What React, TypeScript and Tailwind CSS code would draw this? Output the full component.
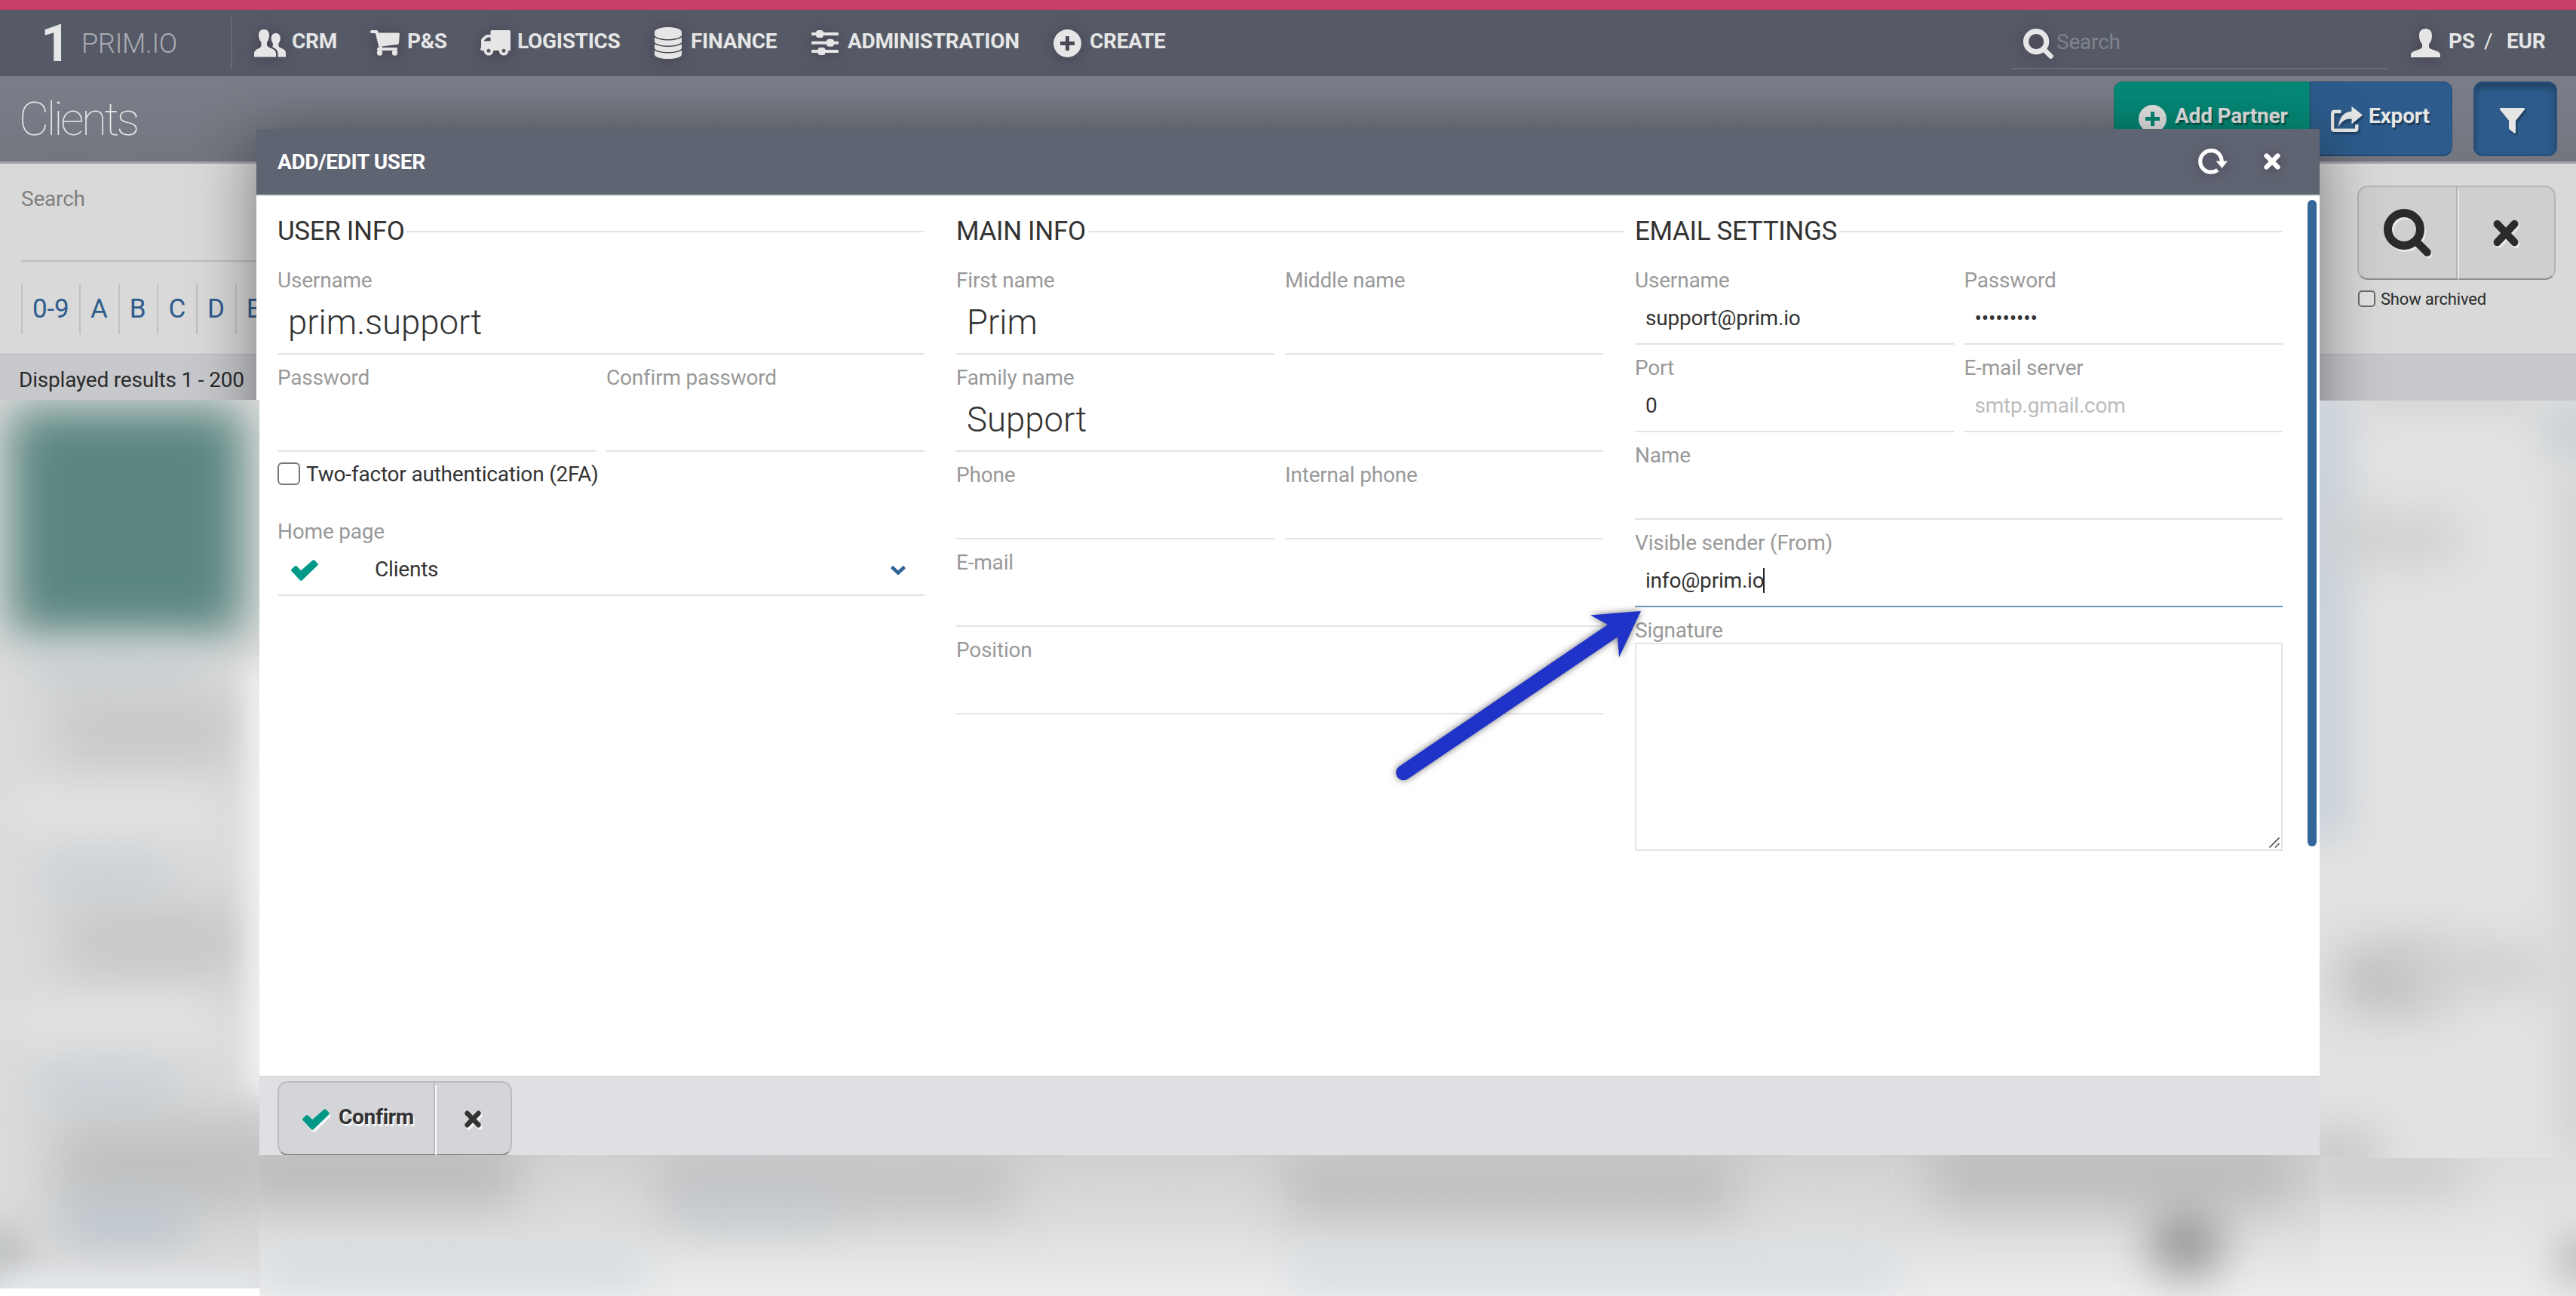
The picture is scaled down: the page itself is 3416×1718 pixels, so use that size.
import type { ReactNode } from "react";

const menu = [
    { label: "CRM", width: "w-[154px]", iconWidth: "w-[50px]", icon: <UsersIcon /> },
    { label: "P&S", width: "w-[146px]", iconWidth: "w-[49px]", icon: <CartIcon /> },
    { label: "LOGISTICS", width: "w-[231px]", iconWidth: "w-[49px]", icon: <TruckIcon /> },
    { label: "FINANCE", width: "w-[208px]", iconWidth: "w-[48px]", icon: <DatabaseIcon /> },
    { label: "ADMINISTRATION", width: "w-[321px]", iconWidth: "w-[48px]", icon: <SlidersIcon /> },
    { label: "CREATE", width: "w-[160px]", iconWidth: "w-[48px]", icon: <PlusIcon /> },
];

const letters = ["A", "B", "C", "D", "E"];

function UsersIcon() {
    return (
        <svg width="42" height="37" viewBox="0 0 42 37" fill="currentColor">
            <path d="M13 0c4.600 0 7 3 7 7.500 0 4-1.200 7.500-3 9.500v3.500c0 2 2 3 5.200 4.300C26.500 26.700 29 28.500 29 32v4.500H0V32c0-3.500 2.500-5.300 6.300-7C8.500 24 9.500 22.500 9.500 20.500V17C7.500 15 6 11.500 6 7.500 6 3 8.400 0 13 0z" />
            <path d="M28.700 5c3.800 0 6 2.600 6 6.500 0 3-1 5.500-2.300 7.300v2.700c0 1.500 1.500 2.400 4.200 3.600 3.600 1.600 5.400 3 5.400 6V36.500H31.500V32c0-3.800-2-6-6.500-8.200-.8-.4-1-1.200-.5-1.800.4-.6.500-1.500.5-3.200-1.400-1.800-2.300-4.300-2.300-7.300 0-3.900 2.200-6.500 6-6.500z" />
        </svg>
    );
}

function UserIcon() {
    return (
        <svg width="39" height="38" viewBox="0 0 39 38" fill="currentColor">
            <path d="M19.500 0c5.500 0 8.500 3.500 8.500 9 0 5-1.500 9-4 11.500v3.200c0 2 2 3 6.500 4.600C36 30.300 39 31.500 39 35v3H0v-3c0-3.500 3-4.700 8.500-6.700 4.500-1.600 6.500-2.600 6.500-4.600v-3.200C12.500 18 11 14 11 9c0-5.500 3-9 8.500-9z" />
        </svg>
    );
}

function CartIcon() {
    return (
        <svg width="39" height="34" viewBox="0 0 39 34" fill="currentColor">
            <path d="M2 0h6c1.200 0 1.900.6 2.200 1.700l.6 1.800H37c1.400 0 2 .8 1.900 2L38 17c-.1 1.200-.8 1.800-2 2l-20.500 2.500.4 1.700H34c2 0 2 3.800 0 3.800H12.500L6.800 4H2C-.6 4-.6 0 2 0z" />
            <rect x="9" y="23" width="27" height="4" rx="1.500" />
            <circle cx="12.500" cy="30" r="3.700" />
            <circle cx="32.500" cy="30" r="3.700" />
        </svg>
    );
}

function TruckIcon() {
    return (
        <svg width="40" height="34" viewBox="0 0 40 34" fill="currentColor">
            <path
                fillRule="evenodd"
                d="M15.500 0H38c1.300 0 2 .7 2 2v25H1.500C-.3 27-.3 23.500 1 23.500V14c0-1.500.5-2.500 1.500-3.500L6 7.500C7 6.500 8 6 9.500 6h4V2c0-1.300.7-2 2-2zM13.500 9.500h-3c-.8 0-1.300.2-1.800.7L5.500 13c-.8.700-.5 1.500.5 1.500h7.500z"
            />
            <circle cx="11" cy="27.200" r="6.300" />
            <circle cx="31" cy="27.200" r="6.300" />
            <circle cx="11" cy="27.200" r="2.500" fill="#555a66" />
            <circle cx="31" cy="27.200" r="2.500" fill="#555a66" />
        </svg>
    );
}

function DatabaseIcon() {
    return (
        <svg width="36" height="42" viewBox="0 0 36 42" fill="currentColor">
            <path d="M18 0c9 0 18 2.600 18 6.500V10c0 3.700-9 6-18 6S0 13.700 0 10V6.500C0 2.600 9 0 18 0z" />
            <path d="M0 13.500C4 16.300 11 17.500 18 17.500s14-1.200 18-4V19c0 3.500-9 5.500-18 5.500S0 22.500 0 19z" />
            <path d="M0 22.300C4 25 11 26 18 26s14-1 18-3.700v5.200c0 3.500-9 5.500-18 5.500S0 31 0 27.500z" />
            <path d="M0 30.800c4 2.700 11 3.700 18 3.700s14-1 18-3.700V36c0 4-9 6-18 6S0 40 0 36z" />
        </svg>
    );
}

function SlidersIcon() {
    return (
        <svg width="36" height="34" viewBox="0 0 36 34" fill="currentColor">
            <rect y="3" width="36" height="4" rx="1" />
            <rect y="14.700" width="36" height="4" rx="1" />
            <rect y="26" width="36" height="4" rx="1" />
            <rect x="6" y="0" width="10" height="10" rx="3.500" />
            <rect x="20" y="11.700" width="10" height="10" rx="3.500" />
            <rect x="8.500" y="23" width="10" height="10" rx="3.500" />
        </svg>
    );
}

function PlusIcon() {
    return (
        <svg width="37" height="37" viewBox="0 0 37 37" fill="currentColor">
            <path
                fillRule="evenodd"
                d="M18.500 0a18.500 18.500 0 1 1 0 37 18.500 18.500 0 1 1 0-37zM16 9v7H9v5h7v7h5v-7h7v-5h-7V9z"
            />
        </svg>
    );
}

function SearchIcon({ size }: { size: number }) {
    return (
        <svg width={size} height={size} viewBox="0 0 63 63" fill="none" stroke="currentColor">
            <circle cx="27" cy="27" r="21.500" strokeWidth="11" />
            <path d="M43 43L57.500 57.500" strokeWidth="10.500" strokeLinecap="round" />
        </svg>
    );
}

function ExportIcon() {
    return (
        <svg width="42" height="34" viewBox="0 0 42 34" fill="none">
            <path d="M13.500 7H4.500Q2.200 7 2.200 9.500V29.500Q2.200 31.800 4.500 31.800H32Q34.300 31.800 34.300 29.500V24" stroke="currentColor" strokeWidth="4.400" />
            <path d="M27.500 0L42 11.500 27.500 23.500V16.500C19.500 16.300 14.500 19 10 27.500 11 15 16.500 7.500 27.500 6.500z" fill="currentColor" />
        </svg>
    );
}

function FilterIcon() {
    return (
        <svg width="33" height="34" viewBox="0 0 33 34" fill="currentColor">
            <path d="M1.500 0h30c1.500 0 2 1.500 1 2.800L21 17v15.500c0 1.300-1 1.800-2 1l-6-4.700c-.7-.6-1-1.200-1-2V17L.5 2.800C-.5 1.500 0 0 1.500 0z" />
        </svg>
    );
}

function CloseIcon({ width, height }: { width: number; height: number }) {
    return (
        <svg width={width} height={height} viewBox="0 0 22 22" preserveAspectRatio="none" fill="none" stroke="currentColor">
            <path d="M3.600 3.600l14.800 14.800M18.400 3.600L3.600 18.400" strokeWidth="6.400" strokeLinecap="round" />
        </svg>
    );
}

function CheckIcon() {
    return (
        <svg width="36" height="28" viewBox="0 0 36 28" fill="currentColor">
            <path d="M.7 12.500L4.800 8.600c.9-.8 1.800-.8 2.700 0l5.700 5.600L28.500.8c.9-.8 1.900-.8 2.700 0l3.900 4c.9.9.9 1.800 0 2.700L14.700 27.200c-.9.800-1.900.8-2.800 0L.7 15.300c-.9-1-.9-1.900 0-2.800z" />
        </svg>
    );
}

function RefreshIcon() {
    return (
        <svg width="39" height="34" viewBox="0 0 39 34" fill="none">
            <path d="M31.300 18.500C31.500 9 25.500 2.600 17.500 2.600 9 2.600 2.700 9 2.700 17S9 31.200 17 31.200c3.300 0 6.300-1 8.800-3" stroke="currentColor" strokeWidth="5.200" />
            <path d="M23.500 16.500H39L31.500 26z" fill="currentColor" />
        </svg>
    );
}

function Field({
    label,
    big = false,
    focused = false,
    children,
}: {
    label: string;
    big?: boolean;
    focused?: boolean;
    children?: ReactNode;
}) {
    return (
        <div className="min-w-0 flex-1 pt-[11px]">
            <div className="h-[38px] leading-[40px] text-[#999]">{label}</div>
            <div
                className={`flex items-center border-b-2 pl-[14px] ${focused ? "border-[#7094b8]" : "border-[#e3e3e3]"} ${
                    big ? "h-[80px] pb-[3px] text-[45.5px] font-light tracking-normal" : "h-[67px] pb-[2px]"
                }`}
            >
                {children}
            </div>
        </div>
    );
}

function Legend({ children, wide = false }: { children: string; wide?: boolean }) {
    return (
        <div
            className={`mt-[6px] mb-[10px] flex h-[48px] items-center gap-[3px] text-[35px] leading-[48px] tracking-[-0.35px] ${
                wide ? "-mr-[28px]" : ""
            }`}
        >
            {children}
            <span className="h-[2px] flex-1 bg-[#e3e3e3]" />
        </div>
    );
}

function TopBar() {
    return (
        <header className="border-t-[13px] border-[#c73e69] bg-[#555a66] text-[#e6e6e6]">
            <nav className="flex h-[88px] items-center">
                <div className="flex h-[70px] w-[308px] items-center border-r-2 border-[#666b77] pl-[54px]">
                    <span className="w-[54px] pt-[2px] text-[69px] leading-[70px] font-bold">1</span>
                    <span className="pt-[2px] text-[36px] font-light text-[#aaadb4]">PRIM.IO</span>
                </div>
                <ul className="ml-[29px] flex items-center font-bold tracking-[-0.3px]">
                    {menu.map((item) => (
                        <li key={item.label} className={`flex items-center ${item.width}`}>
                            <span className={`flex-none drop-shadow-[0_2px_10px_rgba(60,40,60,0.6)] ${item.iconWidth}`}>{item.icon}</span>
                            <span className="pb-[5px]">{item.label}</span>
                        </li>
                    ))}
                </ul>
                <div className="ml-auto flex h-[70px] w-[500px] items-center border-b-2 border-[#666b77] pl-[16px]">
                    <span className="w-[44px] pt-[3px] drop-shadow-[0_2px_10px_rgba(60,40,60,0.6)]">
                        <SearchIcon size={40} />
                    </span>
                    <span className="text-[#80838d]">Search</span>
                </div>
                <div className="ml-[30px] flex w-[219px] items-center font-bold">
                    <span className="w-[50px] drop-shadow-[0_2px_10px_rgba(60,40,60,0.6)]">
                        <UserIcon />
                    </span>
                    <span className="w-[47px] pb-[4px]">PS</span>
                    <span className="w-[30px] pb-[4px] font-normal">/</span>
                    <span className="pb-[4px]">EUR</span>
                </div>
            </nav>
        </header>
    );
}

function PageHeader() {
    return (
        <div className="flex h-[116px] items-start border-b-[3px] border-[#a3a4a8] bg-linear-to-b from-[#7b7e89] to-[#73757f] pl-[25px]">
            <h1 className="text-[62px] leading-[114px] font-thin tracking-[-3.5px] text-[#e6e6e6]">Clients</h1>
            <div className="mt-[7px] ml-auto flex h-[99px] text-[#e6e6e6] font-bold text-shadow-[2px_3px_1px_rgba(0,0,0,0.35)]">
                <div className="flex w-[260px] items-center rounded-l-[12px] border border-b-2 border-[#0b7a6b] bg-[#058a78] pb-[8px] pl-[32px]">
                    <span className="mt-[8px] w-[48px]">
                        <PlusIcon />
                    </span>
                    <span className="pt-px">Add Partner</span>
                </div>
                <div className="flex w-[189px] items-center rounded-r-[12px] border border-b-2 border-[#244a72] bg-[#2d5c8c] pb-[8px] pl-[27px]">
                    <span className="mt-[10px] w-[50px] drop-shadow-[2px_3px_1px_rgba(0,0,0,0.3)]">
                        <ExportIcon />
                    </span>
                    <span className="pt-px">Export</span>
                </div>
            </div>
            <div className="mt-[7px] mr-[25px] ml-[28px] flex h-[99px] w-[111px] items-center justify-center rounded-[12px] border-2 border-[#264f79] bg-[#2d5c8c] pt-[4px] pr-[8px] text-[#e6e6e6] shadow-[inset_0_6px_10px_rgba(0,0,0,0.3)]">
                <span className="drop-shadow-[2px_3px_1px_rgba(0,0,0,0.3)]">
                    <FilterIcon />
                </span>
            </div>
        </div>
    );
}

function SearchPanel() {
    return (
        <div className="flex h-[254px] items-start justify-between border-b-2 border-[#bfbfc1] bg-[#d9d9d9] pl-[28px]">
            <div className="w-[1200px] pt-[27px]">
                <div className="h-[38px] leading-[40px] text-[#808080]">Search</div>
                <div className="h-[65px] border-b-2 border-[#bebebe]" />
                <div className="mt-[29px] flex h-[67px] text-[35px] leading-[68px] text-[#2d5c8c]">
                    <span className="w-[77px] border-l-2 border-[#c1c1c1] pl-[13px]">0-9</span>
                    {letters.map((letter) => (
                        <span key={letter} className="w-[51.700px] border-l-2 border-[#c1c1c1] pl-[13px]">
                            {letter}
                        </span>
                    ))}
                </div>
            </div>
            <div className="mr-[27px] pt-[29px] text-[#2b2b2b]">
                <div className="flex h-[125px] w-[263px] rounded-[14px] border-2 border-[#b5b5b5] border-b-[#8e8e8e] bg-[#cfcfcf]">
                    <span className="flex flex-1 items-center justify-center drop-shadow-[2px_3px_0_rgba(255,255,255,0.5)]">
                        <SearchIcon size={63} />
                    </span>
                    <span className="flex flex-1 items-center justify-center border-l-2 border-[#b5b5b5] drop-shadow-[2px_3px_0_rgba(255,255,255,0.5)]">
                        <CloseIcon width={34} height={36} />
                    </span>
                </div>
                <div className="mt-[13px] flex h-[24px] items-center text-[22px]">
                    <span className="mr-[7px] ml-[1px] h-[22px] w-[23px] rounded-[5px] border-2 border-[#6c6c6c] bg-[#e3e3e3]" />
                    <span className="pt-[2px]">Show archived</span>
                </div>
            </div>
        </div>
    );
}

function UserInfo() {
    return (
        <section className="w-[858px]">
            <Legend>USER INFO</Legend>
            <Field label="Username" big>
                prim.support
            </Field>
            <div className="flex gap-[14px]">
                <Field label="Password" big />
                <Field label="Confirm password" big />
            </div>
            <div className="mt-[14px] mb-[31px] flex h-[30px] items-center gap-[8px]">
                <span className="h-[30px] w-[30px] rounded-[6px] border-2 border-[#767676]" />
                <span className="pt-px">Two-factor authentication (2FA)</span>
            </div>
            <Field label="Home page">
                <span className="ml-[4px] w-[111px] pt-[3px] text-[#009988]">
                    <CheckIcon />
                </span>
                Clients
                <svg className="mt-[2px] mr-[24px] ml-auto" width="22" height="14" viewBox="0 0 22 14" fill="none">
                    <path d="M2.500 2.500L11 10.500 19.500 2.500" stroke="#2f6299" strokeWidth="4.500" />
                </svg>
            </Field>
        </section>
    );
}

function MainInfo() {
    return (
        <section className="w-[858px]">
            <Legend wide>MAIN INFO</Legend>
            <div className="flex gap-[14px]">
                <Field label="First name" big>
                    Prim
                </Field>
                <Field label="Middle name" big />
            </div>
            <Field label="Family name" big>
                Support
            </Field>
            <div className="flex gap-[14px]">
                <Field label="Phone" />
                <Field label="Internal phone" />
            </div>
            <Field label="E-mail" />
            <Field label="Position" />
        </section>
    );
}

function EmailSettings() {
    return (
        <section className="w-[859px]">
            <Legend>EMAIL SETTINGS</Legend>
            <div className="flex gap-[14px]">
                <Field label="Username">support@prim.io</Field>
                <Field label="Password">•••••••••</Field>
            </div>
            <div className="flex gap-[14px]">
                <Field label="Port">0</Field>
                <Field label="E-mail server">
                    <span className="text-[#bcbcbc]">smtp.gmail.com</span>
                </Field>
            </div>
            <Field label="Name" />
            <Field label="Visible sender (From)" focused>
                info@prim.io
                <span className="-ml-px h-[33px] w-[2px] bg-[#222]" />
            </Field>
            <div className="pt-[11px]">
                <div className="h-[36px] leading-[40px] text-[#999]">Signature</div>
                <div className="flex h-[276px] items-end justify-end border-2 border-[#e3e3e3] p-[2px]">
                    <svg width="14" height="14" viewBox="0 0 14 14" stroke="#555" strokeWidth="1.600">
                        <path d="M.5 13.500l13-13M8 13.500l5.500-5.500" />
                    </svg>
                </div>
            </div>
        </section>
    );
}

function UserModal() {
    return (
        <div className="absolute top-[171px] left-[340px] flex h-[1360px] w-[2736px] flex-col bg-white text-[#333] shadow-[0_14px_80px_rgba(0,0,0,0.45)]">
            <div className="flex h-[88px] items-center border-b-2 border-[#868a95] bg-[#5f6472] pl-[28px] text-white">
                <span className="pt-[2px] font-bold tracking-[-0.35px]">ADD/EDIT USER</span>
                <span className="ml-auto drop-shadow-[0_2px_8px_rgba(60,40,60,0.6)]">
                    <RefreshIcon />
                </span>
                <span className="mr-[52px] ml-[48px] drop-shadow-[0_2px_8px_rgba(60,40,60,0.6)]">
                    <CloseIcon width={22} height={22} />
                </span>
            </div>
            <div className="flex h-[1167px] pt-[18px] pl-[28px]">
                <div className="flex gap-[42px]">
                    <UserInfo />
                    <MainInfo />
                    <EmailSettings />
                </div>
                <div className="-mt-[12px] ml-[33px] h-[857px] w-[12px] rounded-full bg-[#336699]" />
            </div>
            <div className="h-[105px] overflow-hidden border-t-2 border-[#dadbdc] bg-[#dee0e4] pt-[5px] pl-[28px]">
                <div className="flex h-[99px] w-[311px] rounded-[14px] border-2 border-[#bbbcbf] border-b-[#858585] bg-[#d4d5d8]">
                    <div className="flex w-[205px] items-center pl-[31px]">
                        <span className="w-[48px] pt-[3px] text-[#009988] drop-shadow-[2px_3px_0_rgba(255,255,255,0.8)]">
                            <CheckIcon />
                        </span>
                        <span className="pb-[3px] font-bold tracking-[-0.3px] text-shadow-[2px_3px_0_rgba(255,255,255,0.8)]">Confirm</span>
                    </div>
                    <div className="flex flex-1 items-center justify-center border-l-2 border-[#bbbcbf] pt-[2px] drop-shadow-[2px_3px_0_rgba(255,255,255,0.8)]">
                        <CloseIcon width={22} height={23} />
                    </div>
                </div>
            </div>
        </div>
    );
}

// Client cards behind the dialog, blurred out
function BlurredClients() {
    return (
        <>
            <div className="absolute top-[530px] left-0 h-[1178px] w-[344px] overflow-hidden bg-[#dcdcdc]">
                <div className="absolute top-[8px] left-[8px] h-[302px] w-[318px] bg-[#9fb5b2] blur-[30px]" />
                <div className="absolute top-[24px] left-[26px] h-[276px] w-[284px] bg-[#5a8580] blur-[28px]" />
                <div className="absolute top-[340px] left-[50px] h-[40px] w-[210px] bg-[#c0cad1] blur-[30px]" />
                <div className="absolute top-[390px] left-[70px] h-[95px] w-[250px] bg-[#c7c7c7] blur-[34px]" />
                <div className="absolute top-[520px] left-[20px] h-[50px] w-[260px] bg-[#e2e2e2] blur-[24px]" />
                <div className="absolute top-[610px] left-[60px] h-[50px] w-[160px] bg-[#c6d0d9] blur-[30px]" />
                <div className="absolute top-[670px] left-[80px] h-[95px] w-[250px] bg-[#c6c6c6] blur-[34px]" />
                <div className="absolute top-[800px] left-[20px] h-[50px] w-[260px] bg-[#e2e2e2] blur-[24px]" />
                <div className="absolute top-[885px] left-[50px] h-[50px] w-[180px] bg-[#c6d0d9] blur-[30px]" />
                <div className="absolute top-[950px] left-[70px] h-[130px] w-[320px] bg-[#bfc0c1] blur-[36px]" />
                <div className="absolute top-[1070px] left-[80px] h-[45px] w-[170px] bg-[#b8c3cd] blur-[28px]" />
                <div className="absolute top-[1100px] -left-[20px] h-[60px] w-[50px] bg-[#b4b7b8] blur-[24px]" />
                <div className="absolute top-[1160px] left-0 h-[40px] w-[344px] bg-[#e4e8ee] blur-[16px]" />
                <div className="absolute top-[350px] left-[330px] h-[570px] w-[40px] bg-[#f4f4f4] blur-[18px]" />
            </div>
            <div className="absolute top-[531px] left-[3076px] h-[1004px] w-[340px] overflow-hidden bg-[#e2e2e2]">
                <div className="absolute -top-[20px] -left-[30px] h-[600px] w-[70px] bg-[#c8d0d9] blur-[26px]" />
                <div className="absolute -top-[20px] left-[60px] h-[34px] w-[220px] bg-[#d0d1d2] blur-[20px]" />
                <div className="absolute top-[5px] left-[305px] h-[70px] w-[60px] bg-[#bfc9ce] blur-[28px]" />
                <div className="absolute top-[155px] left-[10px] h-[55px] w-[170px] bg-[#cccdcd] blur-[30px]" />
                <div className="absolute top-[725px] left-[25px] h-[85px] w-[130px] bg-[#bebebe] blur-[32px]" />
                <div className="absolute top-[725px] left-[100px] h-[55px] w-[200px] bg-[#cdcdcd] blur-[30px]" />
                <div className="absolute top-[100px] left-[320px] h-[900px] w-[50px] bg-[#d2d2d2] blur-[24px]" />
                <div className="absolute top-[965px] -left-[30px] h-[70px] w-[110px] bg-[#cacaca] blur-[26px]" />
            </div>
            <div className="absolute top-[1531px] left-[344px] h-[187px] w-[2732px] overflow-hidden bg-linear-to-b from-[#d0d0d1] via-[#dcdddd] to-[#ecedee]">
                <div className="absolute -top-[20px] -left-[30px] h-[85px] w-[370px] bg-[#bbbbbc] blur-[30px]" />
                <div className="absolute top-0 left-[530px] h-[75px] w-[470px] bg-[#c1c1c2] blur-[32px]" />
                <div className="absolute top-0 left-[1360px] h-[80px] w-[600px] bg-[#bdbdbe] blur-[32px]" />
                <div className="absolute -top-[15px] left-[2220px] h-[80px] w-[480px] bg-[#bababa] blur-[32px]" />
                <div className="absolute top-[55px] left-[560px] h-[30px] w-[200px] bg-[#c2cad2] blur-[26px]" />
                <div className="absolute top-[135px] left-[10px] h-[35px] w-[500px] bg-[#d0d7de] blur-[26px]" />
                <div className="absolute top-[135px] left-[1370px] h-[35px] w-[800px] bg-[#d2d9e0] blur-[26px]" />
                <div className="absolute top-[72px] left-[2505px] h-[90px] w-[100px] rounded-full bg-[#999] blur-[28px]" />
            </div>
            <div className="absolute top-[1535px] left-[3076px] h-[183px] w-[340px] overflow-hidden bg-linear-to-b from-[#dcdcdc] to-[#ececec]">
                <div className="absolute -top-[5px] -left-[30px] h-[50px] w-[220px] bg-[#c9c9ca] blur-[28px]" />
                <div className="absolute top-[105px] left-[320px] h-[60px] w-[50px] bg-[#b0b0b4] blur-[26px]" />
            </div>
        </>
    );
}

// Pointer drawn over the form, aimed at the sender field
function Arrow() {
    return (
        <svg
            className="absolute top-[780px] left-[1830px] drop-shadow-[0_0_5px_rgba(0,0,0,0.55)]"
            width="370"
            height="270"
            viewBox="1830 780 370 270"
            fill="#1f33c8"
        >
            <path d="M2176 810L2109 815.500 2132 828 1855.500 1016A10 10 0 0 0 1867 1032.500L2145 844.500 2147 871.500z" />
        </svg>
    );
}

export default function App() {
    return (
        <div className="relative h-[1718px] w-[3416px] overflow-hidden bg-white font-['Roboto',sans-serif] text-[28px] leading-[40px] tracking-[-0.2px] whitespace-nowrap">
            <TopBar />
            <PageHeader />
            <SearchPanel />
            <div className="h-[60px] bg-[#c7c8cc] pl-[25px] text-[#2b2b2b]">
                <span className="leading-[66px]">Displayed results 1 - 200</span>
            </div>
            <UserModal />
            <BlurredClients />
            <Arrow />
        </div>
    );
}
